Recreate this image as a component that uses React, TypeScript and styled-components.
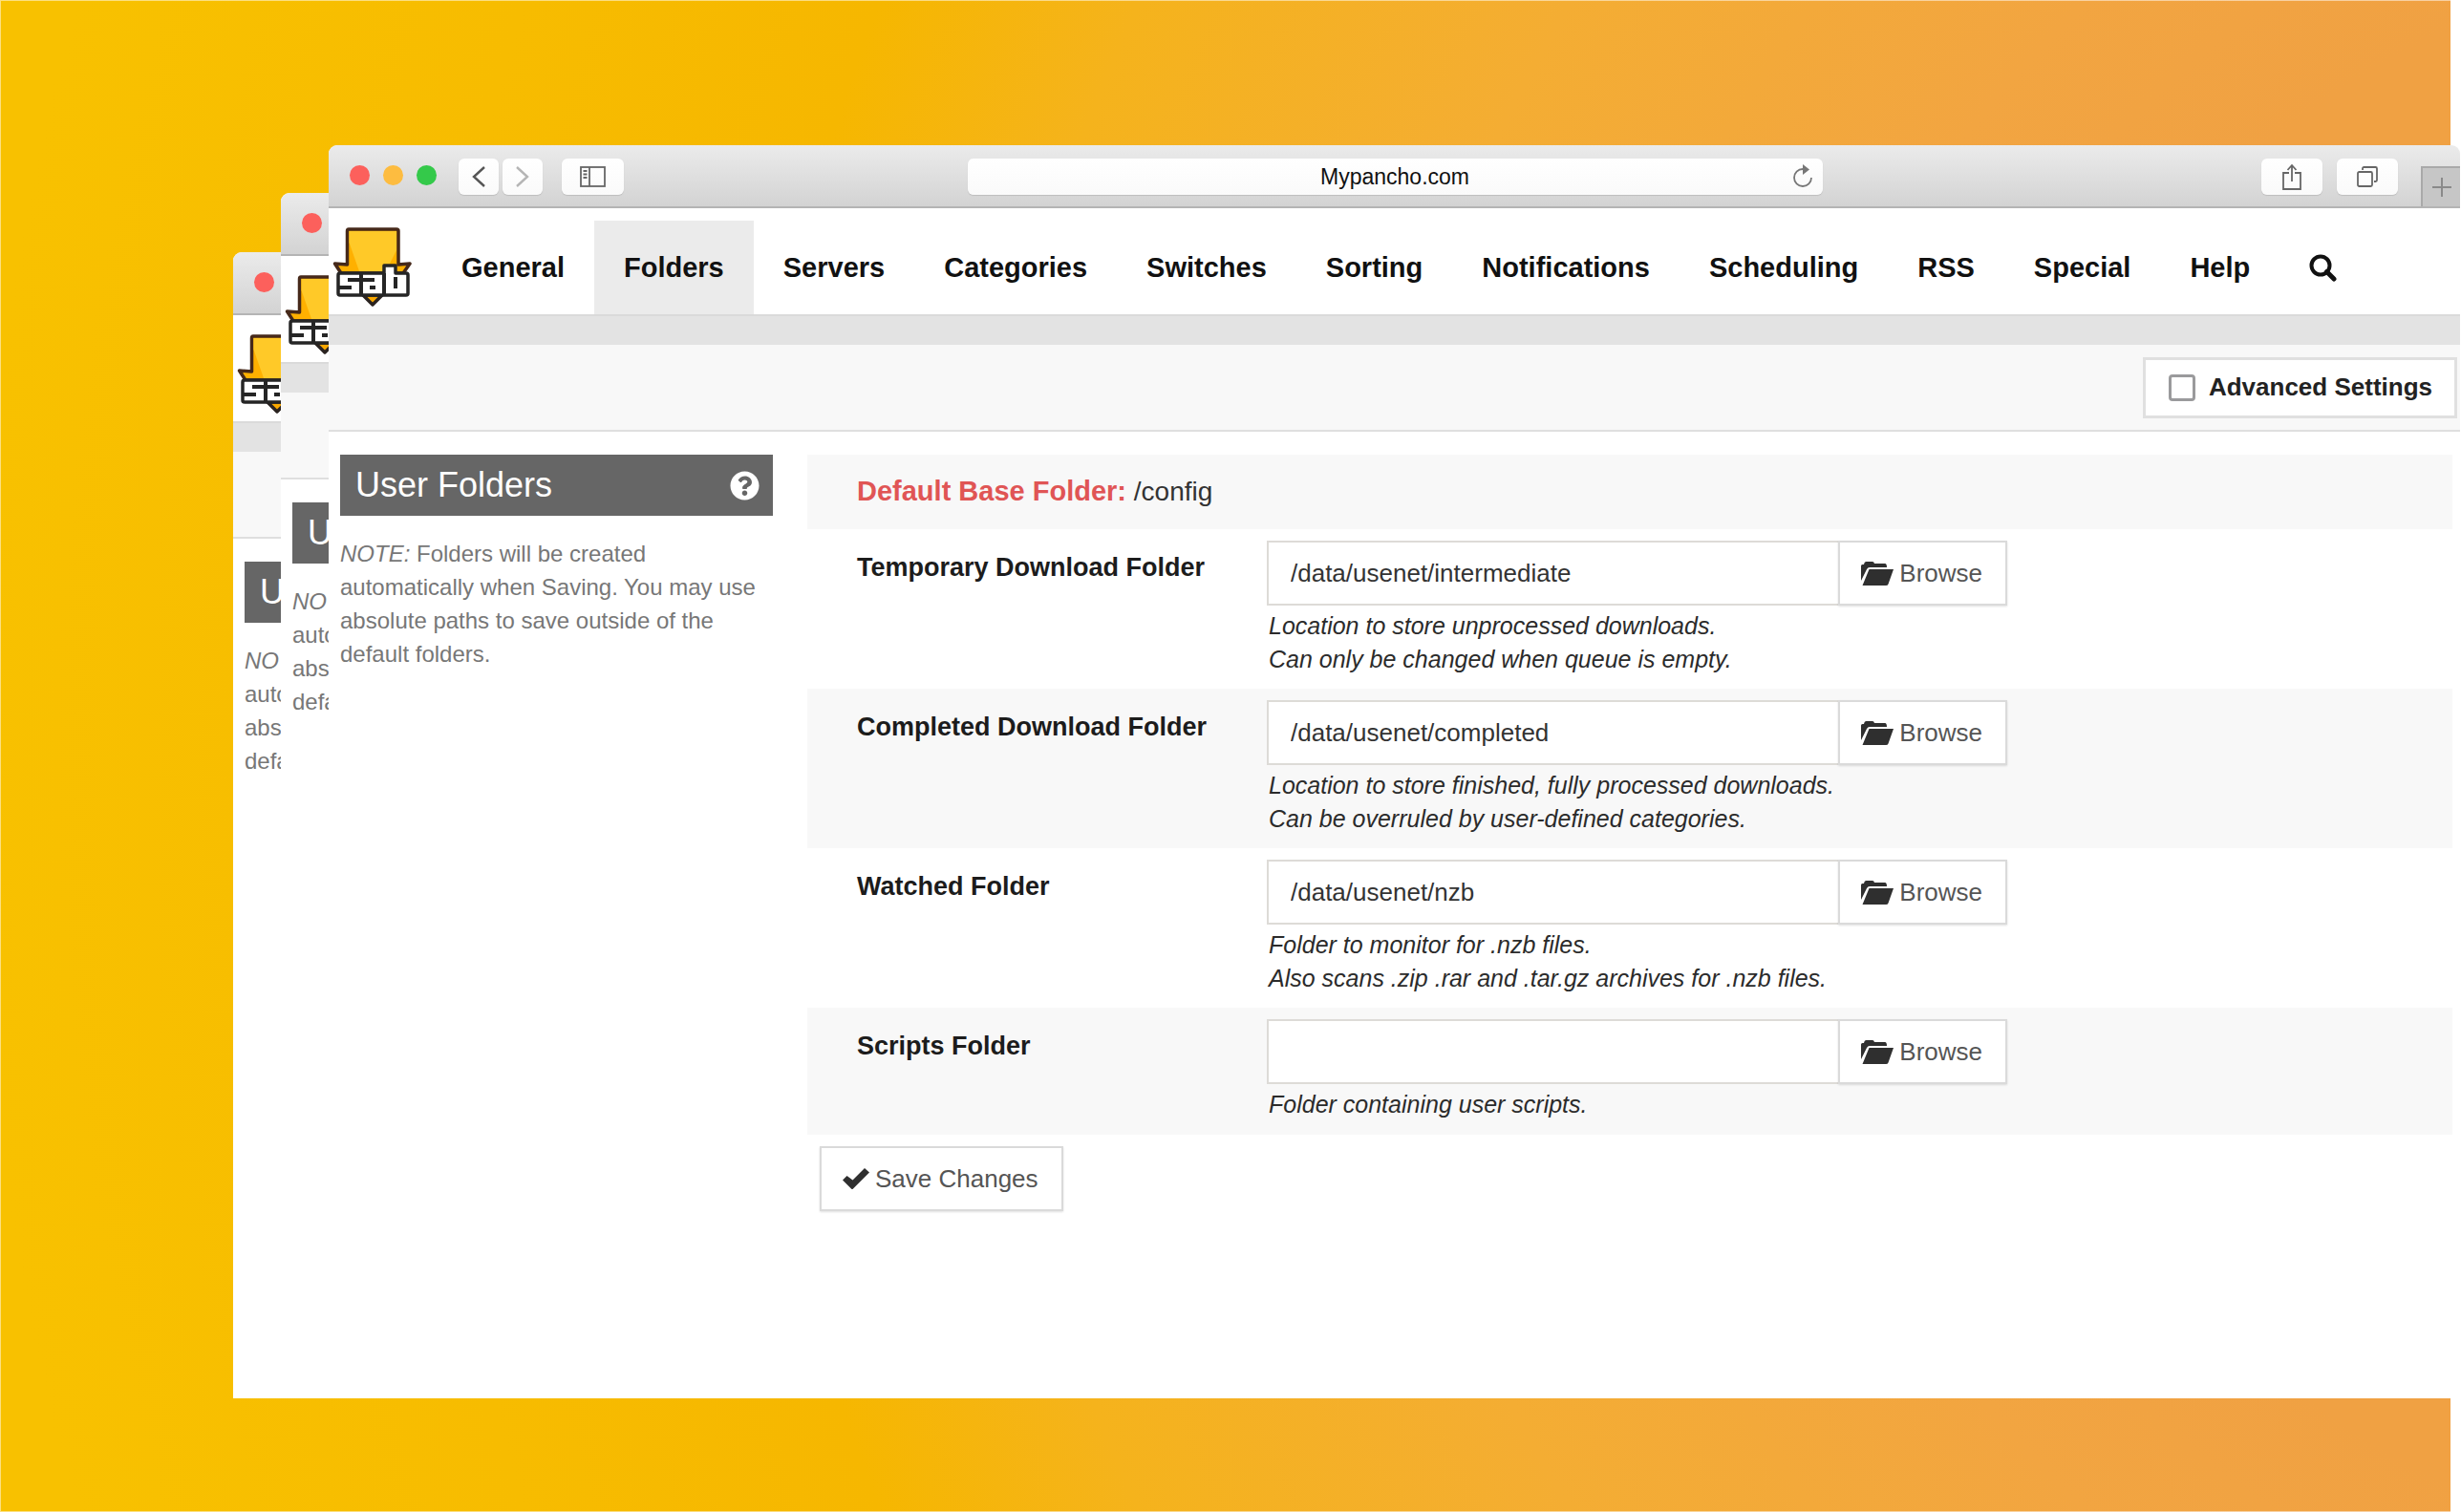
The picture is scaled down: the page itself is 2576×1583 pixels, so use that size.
import React, { useId } from "react";
import styled, { createGlobalStyle } from "styled-components";
import { FaQuestionCircle } from "react-icons/fa";

const sans = '"Liberation Sans", Arial, Helvetica, sans-serif';

const GlobalStyle = createGlobalStyle`
  *, *::before, *::after { box-sizing: border-box; }
  body { margin: 0; font-family: ${sans}; background: #fff; }
  button, input { font-family: inherit; }
`;

/* ---------- Desktop and windows ---------- */

const Desktop = styled.div`
  display: grid;
  grid-template-columns: minmax(0, 1fr);
  min-height: 100vh;
  padding: 152px 1px 119px 244px;
  background:
    linear-gradient(#fff, #fff) right / 11px 100% no-repeat,
    radial-gradient(
      circle at calc(100% + 344px) 50%,
      #f0a143 0,
      #f0a143 840px,
      #f2a541 1080px,
      #f4ad33 1500px,
      #f5b31c 1900px,
      #f6b700 2150px,
      #f7bc00 2500px,
      #f8c100 2950px
    );
  box-shadow: inset 0 0 0 1px rgba(255, 255, 255, 0.5);
`;

const WindowFrame = styled.section<{ $shiftX: number; $shiftY: number }>`
  grid-area: 1 / 1;
  display: flex;
  flex-direction: column;
  min-width: 0;
  margin: ${(p) => p.$shiftY}px 0 0 ${(p) => p.$shiftX}px;
  background: #fff;
  border-radius: 9px 9px 0 0;
  overflow: hidden;
`;

/* A window of which only a narrow left-hand strip is in view. */
const PeekFrame = styled(WindowFrame)`
  justify-self: start;
  width: 50px;
  border-radius: 9px 0 0 0;
`;

const TitleBar = styled.header`
  display: flex;
  align-items: center;
  height: 66px;
  flex: none;
  padding: 2px 0 0 22px;
  background: linear-gradient(#ebebeb, #d3d3d3);
  border-bottom: 2px solid #b4b4b4;
`;

const Lights = styled.div`
  display: flex;
  flex: none;
  gap: 14px;
  margin: 0 23px 3px 0;
`;

const Light = styled.span<{ $color: string }>`
  flex: none;
  width: 21px;
  height: 21px;
  border-radius: 50%;
  background: ${(p) => p.$color};
`;

const ChromeButton = styled.button<{ $width: number }>`
  display: flex;
  align-items: center;
  justify-content: center;
  flex: none;
  width: ${(p) => p.$width}px;
  height: 38px;
  padding: 0;
  border: 0;
  border-radius: 6px;
  background: linear-gradient(#fff, #fafafa);
  box-shadow: 0 1px 1px #bdbdbd;
  color: #666;
`;

const ButtonGroup = styled.div<{ $gap: number }>`
  display: flex;
  gap: ${(p) => p.$gap}px;
`;

const AddressArea = styled.div`
  flex: 1;
  display: flex;
  justify-content: center;
  padding: 0 200px 0 100px;
`;

const AddressBar = styled.div`
  display: flex;
  align-items: center;
  width: 895px;
  height: 38px;
  padding: 0 10px 0 32px;
  border-radius: 6px;
  background: linear-gradient(#fff, #fafafa);
  box-shadow: 0 1px 1px #bdbdbd;
`;

const AddressInput = styled.input`
  flex: 1;
  min-width: 0;
  padding: 0;
  border: 0;
  outline: 0;
  background: transparent;
  color: #111;
  font-size: 23px;
  line-height: 32px;
  text-align: center;
`;

const ReloadButton = styled.button`
  display: flex;
  padding: 0;
  border: 0;
  background: none;
  color: #777;
`;

const NewTabButton = styled.button`
  display: flex;
  align-items: center;
  justify-content: center;
  align-self: flex-end;
  width: 41px;
  height: 42px;
  margin-left: 24px;
  padding: 0;
  border: solid #a9a9a9;
  border-width: 2px 0 0 2px;
  background: #c6c6c6;
  color: #8a8a8a;
`;

/* ---------- Application header ---------- */

const NavBar = styled.div`
  display: flex;
  height: 113px;
  flex: none;
  padding: 13px 0 0 4px;
  border-bottom: 2px solid #dadada;
`;

const LogoLink = styled.a`
  display: block;
  flex: none;
  width: 104px;
  padding-top: 5px;
`;

const Nav = styled.nav`
  display: flex;
`;

const NavLink = styled.a<{ $active?: boolean }>`
  display: flex;
  align-items: center;
  padding: 0 31px;
  background: ${(p) => (p.$active ? "#ebebeb" : "transparent")};
  color: #111;
  font-size: 29px;
  font-weight: 700;
  line-height: 34px;
  text-decoration: none;
`;

const Strip = styled.div`
  height: 30px;
  flex: none;
  background: #e3e3e3;
`;

const Toolbar = styled.div`
  display: flex;
  align-items: center;
  justify-content: flex-end;
  height: 91px;
  flex: none;
  padding-right: 3px;
  background: #f8f8f8;
  border-bottom: 2px solid #dfdfdf;
`;

const AdvancedToggle = styled.label`
  display: flex;
  align-items: center;
  gap: 14px;
  height: 64px;
  padding: 0 23px 0 24px;
  border: 3px solid #e0e0e0;
  background: #fff;
  color: #222;
  font-size: 26px;
  font-weight: 700;
`;

const CheckBox = styled.input`
  appearance: none;
  width: 28px;
  height: 28px;
  margin: 0;
  border: 3px solid #9a9a9c;
  border-radius: 4px;
  background: #fff;
`;

/* ---------- Page body ---------- */

const Body = styled.div`
  display: flex;
  gap: 36px;
  padding: 24px 8px 40px 12px;
`;

const PeekBody = styled(Body)`
  padding-right: 0;
`;

const Side = styled.aside`
  flex: none;
  width: 453px;
`;

const PeekSide = styled(Side)`
  width: 38px;
`;

const SideTitle = styled.h2`
  display: flex;
  align-items: center;
  justify-content: space-between;
  height: 64px;
  margin: 0 0 22px;
  padding: 0 14px 0 16px;
  background: #666;
  color: #fff;
  font-size: 36px;
  font-weight: 400;
`;

const PeekTitle = styled(SideTitle)`
  padding-right: 0;
`;

const HelpLink = styled.a`
  display: flex;
  color: #fff;
`;

const Note = styled.p`
  margin: 0;
  color: #777;
  font-size: 24px;
  line-height: 35px;
`;

const Form = styled.form`
  flex: 1;
  min-width: 0;
`;

const BaseRow = styled.div`
  height: 78px;
  padding: 21px 0 0 52px;
  background: #f8f8f8;
  color: #333;
  font-size: 28px;
  line-height: 34px;
`;

const BaseLabel = styled.strong`
  color: #e05555;
  font-size: 29px;
`;

const Row = styled.div`
  display: grid;
  grid-template-columns: 429px minmax(0, 775px);
  min-height: 133px;
  padding: 12px 0 13px 52px;

  &:nth-child(odd) {
    background: #f8f8f8;
  }
`;

const RowLabel = styled.label`
  padding-top: 12px;
  color: #1c1c1c;
  font-size: 27px;
  font-weight: 700;
  line-height: 32px;
`;

const Field = styled.div`
  display: flex;
  height: 68px;
`;

const PathInput = styled.input`
  flex: 1;
  min-width: 0;
  padding: 0 23px;
  border: 2px solid #dddbd7;
  border-right: 0;
  outline: 0;
  background: #fff;
  color: #333;
  font-size: 26px;
`;

const Button = styled.button`
  display: inline-flex;
  align-items: center;
  gap: 6px;
  height: 68px;
  padding: 0 24px 0 22px;
  border: 2px solid #dadada;
  background: #fff;
  box-shadow: 0 1px 2px rgba(0, 0, 0, 0.12);
  color: #555;
  font-size: 26px;
  white-space: nowrap;
`;

const Hint = styled.p`
  margin: 4px 0 0 2px;
  color: #2b2b2b;
  font-size: 25px;
  font-style: italic;
  line-height: 35px;
`;

const Actions = styled.div`
  padding: 12px 13px;
`;

/* ---------- Drawings ---------- */

const Chevron = ({ flip }: { flip?: boolean }) => (
  <svg width="14" height="22" viewBox="0 0 14 22" fill="none" stroke={flip ? "#b5b5b5" : "#555"} strokeWidth="2.4">
    <path d={flip ? "M1 1L12 11L1 21" : "M13 1L2 11L13 21"} />
  </svg>
);

const SidebarIcon = () => (
  <svg width="27" height="22" viewBox="0 0 27 22" fill="none" stroke="currentColor" strokeWidth="1.8">
    <rect x="1" y="1" width="25" height="20" />
    <path d="M10 1V21M3.5 5H7.5M3.5 8.500H7.5M3.5 12H7.5" />
  </svg>
);

const ReloadIcon = () => (
  <svg width="22" height="26" viewBox="0 0 22 26" fill="none" stroke="currentColor" strokeWidth="1.8">
    <path d="M11 5A9 9 0 1 0 20 14" />
    <path d="M11 0L18 5.500L11 11Z" fill="currentColor" stroke="none" />
  </svg>
);

const ShareIcon = () => (
  <svg width="20" height="28" viewBox="0 0 20 28" fill="none" stroke="currentColor" strokeWidth="1.8">
    <path d="M7 10H1V27H19V10H13M10 19V2M5.500 7L10 2L14.500 7" />
  </svg>
);

const TabsIcon = () => (
  <svg width="22" height="22" viewBox="0 0 22 22" fill="none" stroke="currentColor" strokeWidth="1.8">
    <rect x="1" y="6" width="15" height="15" rx="1.500" />
    <path d="M6 4V2.500Q6 1 7.500 1H19.500Q21 1 21 2.500V14.500Q21 16 19.500 16H18" />
  </svg>
);

const PlusIcon = () => (
  <svg width="20" height="20" viewBox="0 0 20 20" stroke="currentColor" strokeWidth="2">
    <path d="M10 0V20M0 10H20" />
  </svg>
);

const SearchIcon = () => (
  <svg width="29" height="29" viewBox="0 0 29 29" fill="none" stroke="#111">
    <circle cx="12" cy="12" r="9.500" strokeWidth="4" />
    <path d="M18.500 18.500L26 26" strokeWidth="5" strokeLinecap="round" />
  </svg>
);

const FolderIcon = () => (
  <svg width="34" height="25" viewBox="0 0 34 25" fill="#2f2f2f">
    <path d="M0 20V4.500Q0 3 1.500 3H3Q3.500 0 5.500 0H12Q13.500 0 14 2H25Q27 2 27 6H9Q7 6 6 8Z" />
    <path d="M8.500 8H34L28.500 23.500Q28 25 26 25H1.500Z" />
  </svg>
);

const CheckIcon = () => (
  <svg width="28" height="22" viewBox="0 0 28 22" fill="#2f2f2f">
    <path d="M0 12.500L4.500 8L10.500 12.500L23 0L28 4.500L11 21.500Q10 22.500 9 21.500Z" />
  </svg>
);

const Logo = () => (
  <svg width="84" height="86" viewBox="0 0 84 86" role="img" aria-label="SABnzbd">
    <path d="M32 73L42 83L52 73Z" fill="#f9a800" stroke="#2a2320" strokeWidth="3.500" strokeLinejoin="round" />
    <path
      d="M17 4Q15.500 4 15.500 6V41L2.500 40L9 50H74L81 40L69 41V6Q69 4 67 4Z"
      fill="#ffb000"
      stroke="#46291a"
      strokeWidth="3.500"
      strokeLinejoin="round"
    />
    <path d="M17.500 6H67V26L56 48H28L17.500 18Z" fill="#ffc928" />
    <path
      d="M8 50H54V42H66V50H77Q79 50 79 52V71Q79 73 77 73H8Q6 73 6 71V52Q6 50 8 50Z"
      fill="#fff"
      stroke="#252525"
      strokeWidth="3.500"
      strokeLinejoin="round"
    />
    <path
      d="M30 50V73M54 50V73M16 57H44M7 65H20M39 65H45M66 54V66"
      fill="none"
      stroke="#252525"
      strokeWidth="4"
    />
  </svg>
);

/* ---------- Data ---------- */

const NAV_ITEMS = [
  "General",
  "Folders",
  "Servers",
  "Categories",
  "Switches",
  "Sorting",
  "Notifications",
  "Scheduling",
  "RSS",
  "Special",
  "Help",
];

const FOLDERS = [
  {
    label: "Temporary Download Folder",
    value: "/data/usenet/intermediate",
    hints: ["Location to store unprocessed downloads.", "Can only be changed when queue is empty."],
  },
  {
    label: "Completed Download Folder",
    value: "/data/usenet/completed",
    hints: ["Location to store finished, fully processed downloads.", "Can be overruled by user-defined categories."],
  },
  {
    label: "Watched Folder",
    value: "/data/usenet/nzb",
    hints: ["Folder to monitor for .nzb files.", "Also scans .zip .rar and .tar.gz archives for .nzb files."],
  },
  { label: "Scripts Folder", value: "", hints: ["Folder containing user scripts."] },
];

/* ---------- Parts ---------- */

function WindowLights() {
  return (
    <Lights>
      <Light $color="#fc605c" />
      <Light $color="#fdbc40" />
      <Light $color="#34c94a" />
    </Lights>
  );
}

function UserFolders() {
  return (
    <Side>
      <SideTitle>
        User Folders
        <HelpLink href="#help" aria-label="Help on folders">
          <FaQuestionCircle size={31} />
        </HelpLink>
      </SideTitle>
      <Note>
        <em>NOTE:</em> Folders will be created automatically when Saving. You may use absolute paths to save outside of
        the default folders.
      </Note>
    </Side>
  );
}

function BackWindow({ shiftX, shiftY }: { shiftX: number; shiftY: number }) {
  return (
    <PeekFrame $shiftX={shiftX} $shiftY={shiftY} aria-hidden="true">
      <TitleBar>
        <WindowLights />
      </TitleBar>
      <NavBar>
        <LogoLink as="div">
          <Logo />
        </LogoLink>
      </NavBar>
      <Strip />
      <Toolbar />
      <PeekBody>
        <PeekSide>
          <PeekTitle>U</PeekTitle>
          <Note>
            <em>NO</em>
            <br />
            auto
            <br />
            abs
            <br />
            defa
          </Note>
        </PeekSide>
      </PeekBody>
    </PeekFrame>
  );
}

function FolderRow({ label, value, hints }: (typeof FOLDERS)[number]) {
  const id = useId();
  return (
    <Row>
      <RowLabel htmlFor={id}>{label}</RowLabel>
      <div>
        <Field>
          <PathInput id={id} type="text" defaultValue={value} />
          <Button type="button">
            <FolderIcon />
            Browse
          </Button>
        </Field>
        <Hint>
          {hints.map((line, i) => (
            <React.Fragment key={line}>
              {i > 0 && <br />}
              {line}
            </React.Fragment>
          ))}
        </Hint>
      </div>
    </Row>
  );
}

function FrontWindow() {
  return (
    <WindowFrame $shiftX={100} $shiftY={0}>
      <TitleBar>
        <WindowLights />
        <ButtonGroup $gap={20}>
          <ButtonGroup $gap={4}>
            <ChromeButton $width={42} aria-label="Back">
              <Chevron />
            </ChromeButton>
            <ChromeButton $width={42} aria-label="Forward">
              <Chevron flip />
            </ChromeButton>
          </ButtonGroup>
          <ChromeButton $width={65} aria-label="Show sidebar">
            <SidebarIcon />
          </ChromeButton>
        </ButtonGroup>
        <AddressArea>
          <AddressBar>
            <AddressInput type="text" aria-label="Address" defaultValue="Mypancho.com" />
            <ReloadButton aria-label="Reload">
              <ReloadIcon />
            </ReloadButton>
          </AddressBar>
        </AddressArea>
        <ButtonGroup $gap={15}>
          <ChromeButton $width={64} aria-label="Share">
            <ShareIcon />
          </ChromeButton>
          <ChromeButton $width={64} aria-label="Show tabs">
            <TabsIcon />
          </ChromeButton>
        </ButtonGroup>
        <NewTabButton aria-label="New tab">
          <PlusIcon />
        </NewTabButton>
      </TitleBar>
      <NavBar>
        <LogoLink href="#home">
          <Logo />
        </LogoLink>
        <Nav>
          {NAV_ITEMS.map((item) => (
            <NavLink key={item} href={`#${item.toLowerCase()}`} $active={item === "Folders"}>
              {item}
            </NavLink>
          ))}
          <NavLink href="#search" aria-label="Search">
            <SearchIcon />
          </NavLink>
        </Nav>
      </NavBar>
      <Strip />
      <Toolbar>
        <AdvancedToggle>
          <CheckBox type="checkbox" />
          Advanced Settings
        </AdvancedToggle>
      </Toolbar>
      <Body>
        <UserFolders />
        <Form onSubmit={(e) => e.preventDefault()}>
          <BaseRow>
            <BaseLabel>Default Base Folder:</BaseLabel> /config
          </BaseRow>
          {FOLDERS.map((folder) => (
            <FolderRow key={folder.label} {...folder} />
          ))}
          <Actions>
            <Button type="submit">
              <CheckIcon />
              Save Changes
            </Button>
          </Actions>
        </Form>
      </Body>
    </WindowFrame>
  );
}

export default function App() {
  return (
    <>
      <GlobalStyle />
      <Desktop>
        <BackWindow shiftX={0} shiftY={112} />
        <BackWindow shiftX={50} shiftY={50} />
        <FrontWindow />
      </Desktop>
    </>
  );
}
